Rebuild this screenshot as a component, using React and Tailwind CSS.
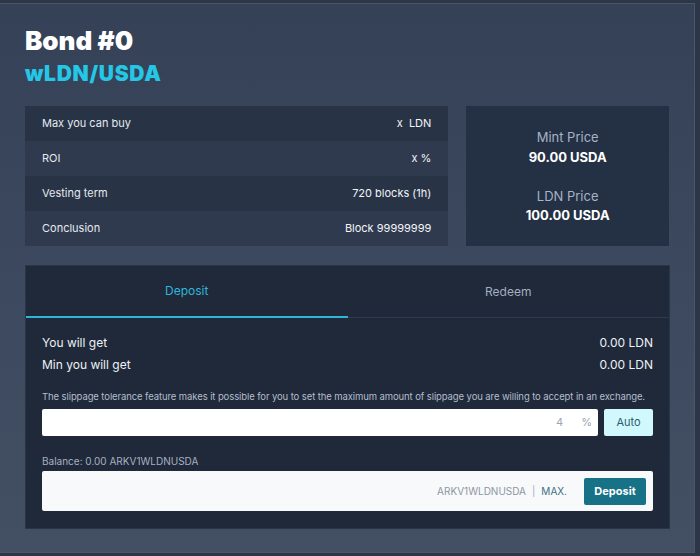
import React, { useState } from 'react';

const rows = [
  { label: 'Max you can buy', value: 'x  LDN' },
  { label: 'ROI', value: 'x %' },
  { label: 'Vesting term', value: '720 blocks (1h)' },
  { label: 'Conclusion', value: 'Block 99999999' },
];

export default function App() {
  const [tab, setTab] = useState('deposit');

  return (
    <div className="w-[700px] h-[556px] bg-[#2c3647] pt-[3px] overflow-hidden" style={{ fontFamily: 'Inter, "Noto Sans", sans-serif' }}>
      <div className="w-[695px] h-[550px] border-r border-b border-t border-[#4b5669] bg-gradient-to-b from-[#354157] to-[#435064] pl-[25px] pr-[25px] pt-[22px]">
        <h1 className="text-[26px] leading-[30px] font-black text-white">Bond #0</h1>
        <h2 className="text-[21px] leading-[24px] font-black text-[#25c7e6] mt-[6px] tracking-[0.7px]">wLDN/USDA</h2>

        <div className="flex gap-[18px] mt-[20px]">
          <div className="w-[424px] flex flex-col">
            {rows.map((r, i) => (
              <div
                key={r.label}
                className={`h-[35px] flex items-center justify-between px-[17px] text-[11px] text-[#e5e9f0] ${i % 2 === 0 ? 'bg-[#283346]' : 'bg-[#2f3a4e]'}`}
              >
                <span>{r.label}</span>
                <span className="whitespace-pre text-[#f3f5f8]">{r.value}</span>
              </div>
            ))}
          </div>
          <div className="w-[203px] h-[140px] bg-[#243044] flex flex-col items-center pt-[22px]">
            <div className="text-[13px] text-[#a7b3c6] leading-[18px]">Mint Price</div>
            <div className="text-[13px] font-bold text-white leading-[16px] mt-[3px]">90.00 USDA</div>
            <div className="text-[13px] text-[#a7b3c6] leading-[18px] mt-[22px]">LDN Price</div>
            <div className="text-[13px] font-bold text-white leading-[16px] mt-[2px]">100.00 USDA</div>
          </div>
        </div>

        <div className="w-[645px] mt-[19px] bg-[#1f293a] border border-[#2a3547] pb-[17px]">
          <div className="flex h-[52px]">
            <button
              onClick={() => setTab('deposit')}
              className={`flex-1 flex items-center justify-center text-[12px] border-b-2 ${tab === 'deposit' ? 'text-[#2fb5d8] border-[#2fb5d8]' : 'text-[#a3aebf] border-[#2e3a4d]'}`}
            >
              Deposit
            </button>
            <button
              onClick={() => setTab('redeem')}
              className={`flex-1 flex items-center justify-center text-[12px] ${tab === 'redeem' ? 'text-[#2fb5d8] border-b-2 border-[#2fb5d8]' : 'text-[#a3aebf] border-b border-[#2e3a4d]'}`}
            >
              Redeem
            </button>
          </div>

          <div className="px-[16px] pt-[14px]">
            <div className="flex justify-between text-[12px] text-[#eef1f5] leading-[22px]">
              <span>You will get</span>
              <span>0.00 LDN</span>
            </div>
            <div className="flex justify-between text-[12px] text-[#eef1f5] leading-[22px]">
              <span>Min you will get</span>
              <span>0.00 LDN</span>
            </div>

            <p className="text-[9.5px] text-[#b3bdcc] mt-[14px] leading-[14px] whitespace-nowrap tracking-[-0.1px]">
              The slippage tolerance feature makes it possible for you to set the maximum amount of slippage you are willing to accept in an exchange.
            </p>

            <div className="flex gap-[6px] mt-[5px]">
              <div className="flex-1 h-[27px] bg-white rounded-[2px] flex items-center justify-end pr-[6px] text-[11px] text-[#9aa4b2]">
                <span>4</span>
                <span className="ml-[18px]">%</span>
              </div>
              <button className="w-[49px] h-[27px] bg-[#d1f8fc] rounded-[2px] text-[11px] text-[#2b5d6e]">Auto</button>
            </div>

            <div className="text-[10px] text-[#a7b1c0] mt-[18px] leading-[14px]">Balance: 0.00 ARKV1WLDNUSDA</div>

            <div className="mt-[3px] h-[40px] bg-[#f7f9fb] rounded-[2px] flex items-center justify-end pr-[7px]">
              <span className="text-[10px] text-[#8c96a4]">ARKV1WLDNUSDA</span>
              <span className="text-[10px] text-[#a8b0bb] mx-[6px]">|</span>
              <span className="text-[10px] text-[#3d6f86]">MAX.</span>
              <button className="ml-[17px] w-[62px] h-[27px] bg-[#177187] rounded-[2px] text-[11px] font-bold text-white">Deposit</button>
            </div>
          </div>
        </div>
      </div>
    </div>
  );
}
